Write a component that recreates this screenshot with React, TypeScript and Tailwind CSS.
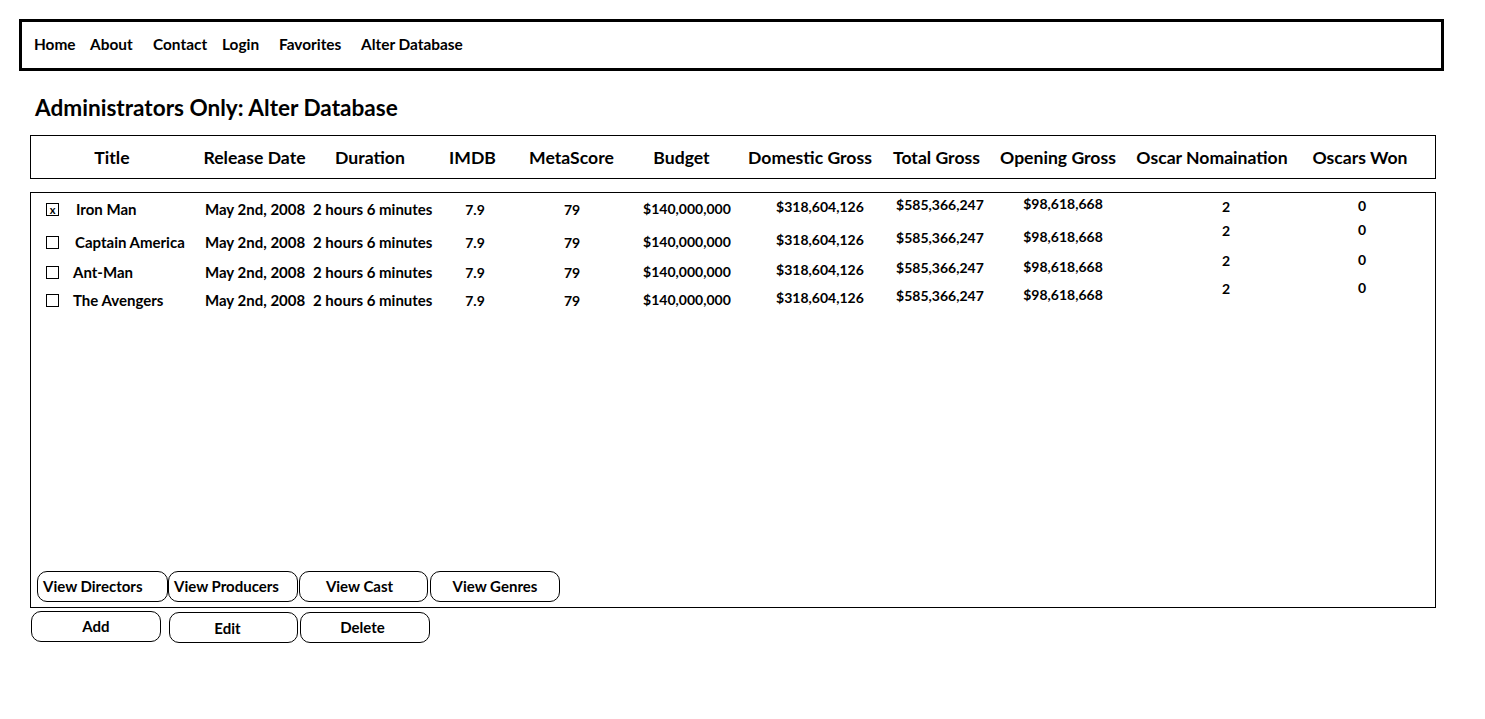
import React from 'react';

const NAV = [
  { label: 'Home', w: 'w-[56px]' },
  { label: 'About', w: 'w-[63px]' },
  { label: 'Contact', w: 'w-[69px]' },
  { label: 'Login', w: 'w-[57px]' },
  { label: 'Favorites', w: 'w-[82px]' },
  { label: 'Alter Database', w: 'w-[120px]' },
];

const HEADERS = [
  { label: 'Title', w: 'w-[162px]' },
  { label: 'Release Date', w: 'w-[123px]' },
  { label: 'Duration', w: 'w-[108px]' },
  { label: 'IMDB', w: 'w-[97px]' },
  { label: 'MetaScore', w: 'w-[101px]' },
  { label: 'Budget', w: 'w-[119px]' },
  { label: 'Domestic Gross', w: 'w-[138px]' },
  { label: 'Total Gross', w: 'w-[115px]' },
  { label: 'Opening Gross', w: 'w-[128px]' },
  { label: 'Oscar Nomaination', w: 'w-[180px]' },
  { label: 'Oscars Won', w: 'w-[116px]' },
];

const ROWS = [
  { title: 'Iron Man', checked: true, h: 'h-[33px] pt-[7px]', titleMl: 'ml-[17px]', late: '' },
  { title: 'Captain America', checked: false, h: 'h-[29px] pt-[7px]', titleMl: 'ml-[16px]', late: '-mt-[11px]' },
  { title: 'Ant-Man', checked: false, h: 'h-[28px] pt-[8px]', titleMl: 'ml-[14px]', late: '-mt-[11px]' },
  { title: 'The Avengers', checked: false, h: 'h-[28px] pt-[8px]', titleMl: 'ml-[14px]', late: '-mt-[11px]' },
];

function Checkbox({ checked }: { checked: boolean }) {
  return (
    <div className="w-[13px] h-[13px] border border-black flex items-center justify-center text-[11px] leading-none font-bold">
      {checked ? 'x' : ''}
    </div>
  );
}

function Row({ row }: { row: (typeof ROWS)[number] }) {
  return (
    <div className={`flex items-start text-[15px] leading-[18px] font-bold whitespace-nowrap ${row.h}`}>
      <div className="w-[174px] flex items-center pl-[15px]">
        <Checkbox checked={row.checked} />
        <span className={row.titleMl}>{row.title}</span>
      </div>
      <div className="w-[108px]">May 2nd, 2008</div>
      <div className="w-[132px]">2 hours 6 minutes</div>
      <div className="w-[60px] text-center mt-[1px] text-[14px]">7.9</div>
      <div className="w-[134px] text-center mt-[1px] text-[14px]">79</div>
      <div className="w-[96px] flex justify-center text-[14px]">$140,000,000</div>
      <div className="w-[20px]" />
      <div className="w-[130px] flex justify-center -mt-[2px] text-[14px]">$318,604,126</div>
      <div className="w-[110px] flex justify-center -mt-[4px] text-[14px]">$585,366,247</div>
      <div className="w-[136px] flex justify-center -mt-[5px] text-[14px]">$98,618,668</div>
      <div className={`w-[190px] text-center text-[14px] ${row.late || '-mt-[2px]'}`}>2</div>
      <div className={`w-[82px] text-center text-[14px] ${row.late ? '-mt-[12px]' : '-mt-[3px]'}`}>0</div>
    </div>
  );
}

function WireButton({ label, className }: { label: string; className: string }) {
  return (
    <button className={`h-[31px] border border-black rounded-[10px] text-[15px] font-bold flex items-center ${className}`}>
      {label}
    </button>
  );
}

export default function App() {
  return (
    <div className="min-h-screen bg-white text-black pt-[19px] pl-[19px]" style={{ fontFamily: 'Lato, "Open Sans", sans-serif' }}>
      {/* Nav bar */}
      <nav className="w-[1425px] h-[52px] border-[3px] border-black flex items-center pl-[12px] pb-[2px] text-[15.4px] font-bold">
        {NAV.map((n) => (
          <a key={n.label} className={`${n.w} leading-[18px] whitespace-nowrap`}>
            {n.label}
          </a>
        ))}
      </nav>

      <h1 className="ml-[16px] mt-[23px] text-[22.6px] leading-[28px] font-bold">Administrators Only: Alter Database</h1>

      {/* Column headers */}
      <div className="ml-[11px] mt-[13px] w-[1406px] h-[44px] border border-black flex items-center pt-[2px] text-[17.6px] font-bold whitespace-nowrap">
        {HEADERS.map((h) => (
          <div key={h.label} className={`${h.w} flex justify-center`}>
            {h.label}
          </div>
        ))}
      </div>

      {/* Rows */}
      <div className="ml-[11px] mt-[13px] w-[1406px] h-[416px] border border-black flex flex-col">
        {ROWS.map((r) => (
          <Row key={r.title} row={r} />
        ))}
        <div className="flex-1" />
        <div className="flex items-start pl-[6px] pb-[5px]">
          <WireButton label="View Directors" className="w-[131px] pl-[5px]" />
          <WireButton label="View Producers" className="w-[130px] pl-[5px]" />
          <WireButton label="View Cast" className="w-[129px] ml-[1px] justify-center pr-[8px]" />
          <WireButton label="View Genres" className="w-[130px] ml-[2px] justify-center" />
        </div>
      </div>

      {/* Actions */}
      <div className="ml-[12px] flex items-start">
        <WireButton label="Add" className="w-[130px] mt-[3px] justify-center" />
        <WireButton label="Edit" className="w-[129px] ml-[8px] mt-[4px] justify-center pr-[12px] pt-[2px]" />
        <WireButton label="Delete" className="w-[130px] ml-[2px] mt-[4px] justify-center pr-[5px]" />
      </div>
    </div>
  );
}
